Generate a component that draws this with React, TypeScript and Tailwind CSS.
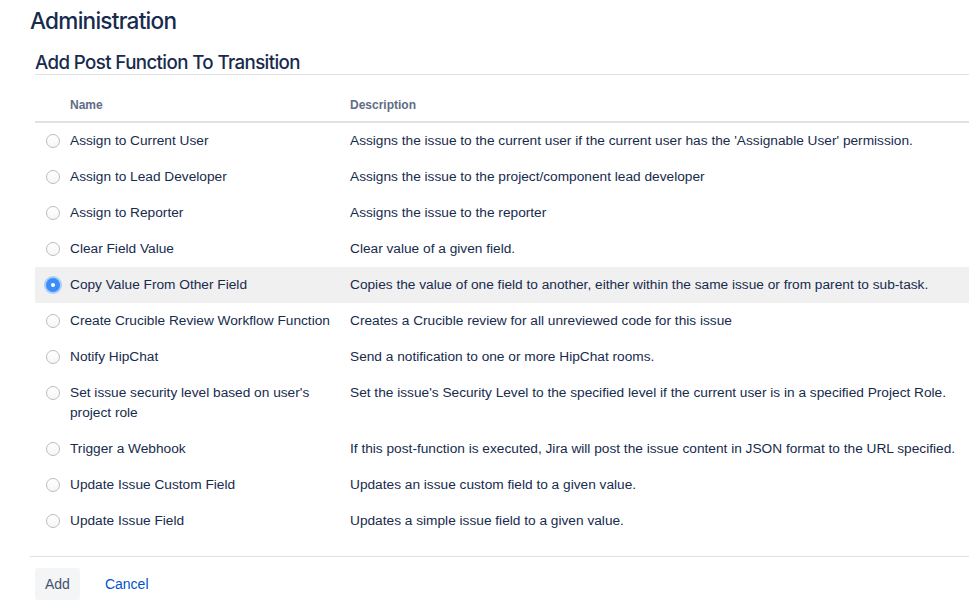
import React, { useState } from "react";

interface PostFunction {
  name: string;
  description: string;
}

const functions: PostFunction[] = [
  { name: "Assign to Current User", description: "Assigns the issue to the current user if the current user has the 'Assignable User' permission." },
  { name: "Assign to Lead Developer", description: "Assigns the issue to the project/component lead developer" },
  { name: "Assign to Reporter", description: "Assigns the issue to the reporter" },
  { name: "Clear Field Value", description: "Clear value of a given field." },
  { name: "Copy Value From Other Field", description: "Copies the value of one field to another, either within the same issue or from parent to sub-task." },
  { name: "Create Crucible Review Workflow Function", description: "Creates a Crucible review for all unreviewed code for this issue" },
  { name: "Notify HipChat", description: "Send a notification to one or more HipChat rooms." },
  { name: "Set issue security level based on user's project role", description: "Set the issue's Security Level to the specified level if the current user is in a specified Project Role." },
  { name: "Trigger a Webhook", description: "If this post-function is executed, Jira will post the issue content in JSON format to the URL specified." },
  { name: "Update Issue Custom Field", description: "Updates an issue custom field to a given value." },
  { name: "Update Issue Field", description: "Updates a simple issue field to a given value." },
];

function Radio({ checked }: { checked: boolean }) {
  if (checked) {
    return (
      <span className="flex h-[14px] w-[14px] items-center justify-center rounded-full bg-[#3b8ef7] shadow-[0_0_0_2px_#a9cdfb]">
        <span className="h-[4px] w-[4px] rounded-full bg-white" />
      </span>
    );
  }
  return <span className="block h-[14px] w-[14px] rounded-full border border-[#bdbdbd] bg-gradient-to-b from-white to-[#f6f6f6]" />;
}

export default function App() {
  const [selected, setSelected] = useState(4);

  return (
    <div className="min-h-screen bg-white pl-[30px] text-[#172b4d] [font-family:'Liberation_Sans',Arial,sans-serif]">
      <h1 className="pt-[7px] text-[22.6px] leading-[28px] font-medium tracking-[-0.75px] text-[#172b4d] [font-family:Inter,sans-serif]">
        Administration
      </h1>

      <div className="pl-[5px]">
        <h2 className="mt-[17px] border-b border-[#dfe1e6] text-[18.7px] leading-[22px] font-medium tracking-[-0.6px] [font-family:Inter,sans-serif]">
          Add Post Function To Transition
        </h2>

        <table className="mt-[12px] w-full border-collapse text-[13.7px] leading-[20px]">
          <thead>
            <tr className="border-b-2 border-[#dfe1e6]">
              <th className="w-[35px]" />
              <th className="w-[280px] pt-[8px] pb-[6px] text-left text-[12px] font-bold text-[#5e6c84]">Name</th>
              <th className="pt-[8px] pb-[6px] text-left text-[12px] font-bold text-[#5e6c84]">Description</th>
            </tr>
          </thead>
          <tbody>
            {functions.map((fn, i) => (
              <tr
                key={fn.name}
                onClick={() => setSelected(i)}
                className={i === selected ? "bg-[#f0f0f0]" : ""}
              >
                <td className="py-[8px] pl-[11px] align-top">
                  <span className="mt-[3px] block">
                    <Radio checked={i === selected} />
                  </span>
                </td>
                <td className="py-[8px] pr-[20px] align-top text-[#172b4d]">{fn.name}</td>
                <td className="py-[8px] align-top text-[#172b4d]">{fn.description}</td>
              </tr>
            ))}
          </tbody>
        </table>
      </div>

      <div className="mt-[17px] border-t border-[#dfe1e6] pt-[11px] pl-[5px] flex items-center gap-[8px]">
        <button className="h-[32px] rounded-[3px] bg-[#f4f5f7] px-[10px] text-[14px] text-[#42526e]">Add</button>
        <button className="h-[32px] px-[17px] text-[14px] text-[#0052cc]">Cancel</button>
      </div>
    </div>
  );
}
